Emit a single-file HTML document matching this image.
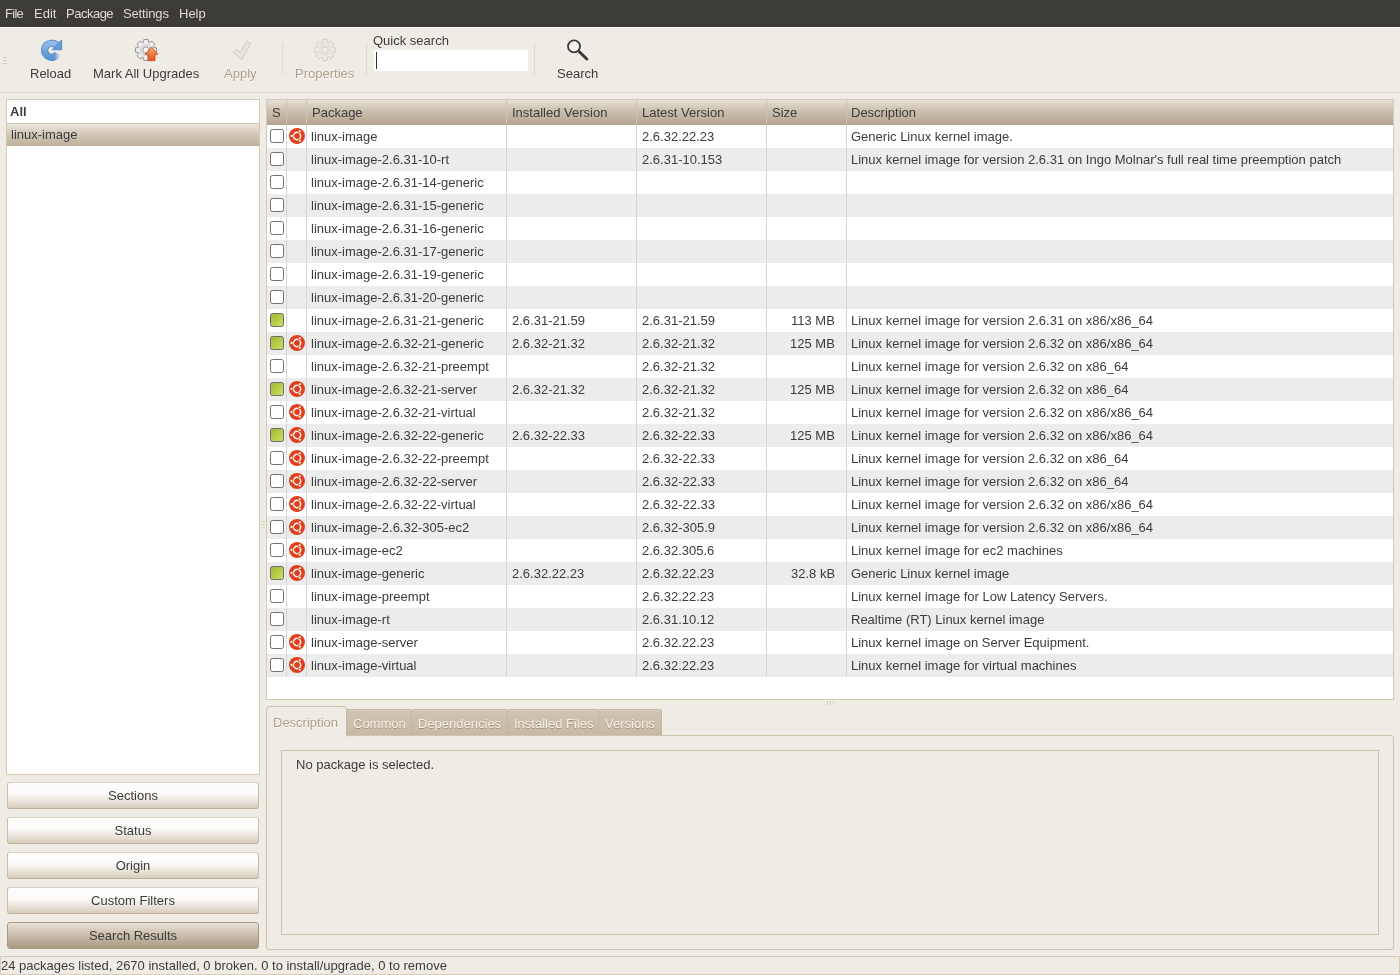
<!DOCTYPE html>
<html><head><meta charset="utf-8">
<style>
*{margin:0;padding:0;box-sizing:border-box}
html,body{width:1400px;height:975px;overflow:hidden;background:#efebe5;font-family:"Liberation Sans",sans-serif;font-size:13px;color:#3c3c3c;position:relative}
.t{position:absolute;line-height:15px;white-space:nowrap;will-change:transform}
#menubar{position:absolute;left:0;top:0;width:1400px;height:27px;background:#3c3b37}
#menubar .t{color:#dfdbd2;top:6px}
#tbline{position:absolute;left:0;top:27px;width:1400px;height:1px;background:#fdfaf3}
#tbbot{position:absolute;left:0;top:92px;width:1400px;height:1px;background:#e1d8c8}
.lbl{top:66px}
.dis{color:#ad9f87;text-shadow:0 1px 0 #fff}
.sep{position:absolute;top:43px;width:1px;height:32px;background:#e3dbcd}
#entry{position:absolute;left:374px;top:50px;width:154px;height:21px;background:#fff}
#caret{position:absolute;left:376px;top:52px;width:1px;height:17px;background:#333}
#left{position:absolute;left:6px;top:99px;width:254px;height:676px;background:#fff;border:1px solid #d5c9b4}
#lefthdr{position:absolute;left:7px;top:123px;width:252px;height:1px;background:#d2c6b0}
#leftsel{position:absolute;left:7px;top:124px;width:252px;height:22px;background:linear-gradient(#ede7de 0%,#d8cebf 35%,#c8bba8 75%,#bcae9a 100%)}
.btn{position:absolute;left:7px;width:252px;height:27px;border:1px solid #c9bda8;border-top-color:#dcd2c2;border-bottom-color:#bcae98;border-radius:3px;background:linear-gradient(#fefefd 0%,#fbfaf8 45%,#d8cdbc 100%);text-align:center;line-height:25px;will-change:transform}
.btn.on{background:linear-gradient(#e9e2d8 0%,#c9bcaa 50%,#a99a84 100%);border-color:#a8997f}
#table{position:absolute;left:266px;top:99px;width:1128px;height:601px;background:#fff;border:1px solid #d5c9b4;overflow:hidden}
#thead{position:absolute;left:267px;top:100px;width:1126px;height:25px;background:linear-gradient(#e6e0d5 0%,#cdc2b1 40%,#bcae9b 80%,#b3a591 100%)}
#thead .hs{position:absolute;top:0;width:1px;height:24px;background:#cfc3b0}
#thead .t{top:5px}
.row{position:absolute;left:267px;width:1126px;height:23px;background:#fff}
.row.alt{background:#ececec}
.row .c{position:absolute;top:4px;line-height:15px;white-space:nowrap;will-change:transform}
.pk{left:44px} .iv{left:245px} .lv{left:375px} .sz{right:558px;text-align:right} .ds{left:584px}
.vl{position:absolute;top:125px;width:1px;height:552px;background:#d6d6d6}
.cb{position:absolute;left:3px;top:4px;width:14px;height:14px;border:1.5px solid #707070;border-radius:2.5px;background:#fff}
.cb.green{background:linear-gradient(135deg,#9fb834,#cde05c);border-color:#6c6c70}
.ubu{position:absolute;left:22px;top:3px}
#nb{position:absolute;left:266px;top:735px;width:1128px;height:215px;border:1px solid #cfc2ab;border-radius:0 3px 3px 3px}
#nbtop{position:absolute;left:346px;top:735px;width:1048px;height:1px;background:#d3c7b1}
#tabact{position:absolute;left:266px;top:706px;width:81px;height:31px;background:#efebe5;border:1px solid #cfc2ab;border-bottom:none;border-radius:4px 4px 0 0}
.tab{position:absolute;top:709px;height:26px;background:linear-gradient(#d0c5b2,#c6b9a3);border:1px solid #c3b69f;border-bottom:none;border-radius:3px 3px 0 0;box-shadow:inset 0 1px 0 #dcd2c2}
.tab .t{top:6px;color:#f5f1ea;text-shadow:0 1px 0 #a39479}
#inner{position:absolute;left:281px;top:750px;width:98px;height:185px;border:1px solid #cfc2ab}
#status{position:absolute;left:0;top:956px;width:1400px;height:19px;border:1px solid #d8ccb8;background:#efebe5}
#grip{position:absolute;left:3px;top:57px;width:4px;height:7px;border-top:1px solid #d9ceb9;border-bottom:1px solid #d9ceb9}
#grip:after{content:"";position:absolute;left:0;top:2px;width:4px;height:1px;background:#d9ceb9}
</style></head><body>
<div id="menubar">
<div class="t" style="left:5px;letter-spacing:-0.7px">File</div>
<div class="t" style="left:34px">Edit</div>
<div class="t" style="left:66px;letter-spacing:-0.5px">Package</div>
<div class="t" style="left:123px;letter-spacing:-0.15px">Settings</div>
<div class="t" style="left:179px">Help</div>
</div>
<div id="tbline"></div>
<div id="grip"></div>
<svg width="24" height="24" viewBox="0 0 24 24" style="position:absolute;left:39px;top:38px">
<defs><linearGradient id="rg" x1="0" y1="0" x2="0" y2="1"><stop offset="0" stop-color="#93bbe6"/><stop offset="0.5" stop-color="#74a4db"/><stop offset="1" stop-color="#5e94d2"/></linearGradient>
<linearGradient id="fade" gradientUnits="userSpaceOnUse" x1="15.5" y1="0" x2="21.5" y2="0"><stop offset="0" stop-color="#fff"/><stop offset="1" stop-color="#fff" stop-opacity="0"/></linearGradient>
<mask id="fm" maskUnits="userSpaceOnUse" x="0" y="0" width="24" height="24"><rect x="0" y="0" width="24" height="12.5" fill="#fff"/><rect x="0" y="12" width="24" height="12.5" fill="url(#fade)"/></mask></defs>
<g mask="url(#fm)">
<path d="M18.6 8.6 A7.0 7.0 0 1 0 18.8 15.6" fill="none" stroke="#4d87ca" stroke-width="7.2"/>
<path d="M18.6 8.6 A7.0 7.0 0 1 0 18.8 15.6" fill="none" stroke="url(#rg)" stroke-width="5.6"/>
</g>
<polygon points="22.6,2.1 22.6,11.8 13.1,11.8" fill="#6a9edb" stroke="#4a84c8" stroke-width="0.9" stroke-linejoin="round"/>
</svg>
<div class="t lbl" style="left:30px">Reload</div>
<svg width="24" height="24" viewBox="0 0 24 24" style="position:absolute;left:134px;top:38px">
<defs><linearGradient id="ag" x1="0" y1="0" x2="0" y2="1"><stop offset="0" stop-color="#f6ab6c"/><stop offset="1" stop-color="#e2561c"/></linearGradient></defs>
<path d="M8.94,4.61 L9.35,4.45 L9.82,1.53 L14.18,1.53 L14.65,4.45 L15.06,4.61 L15.46,4.79 L17.86,3.05 L20.95,6.14 L19.21,8.54 L19.39,8.94 L19.55,9.35 L22.47,9.82 L22.47,14.18 L19.55,14.65 L19.39,15.06 L19.21,15.46 L20.95,17.86 L17.86,20.95 L15.46,19.21 L15.06,19.39 L14.65,19.55 L14.18,22.47 L9.82,22.47 L9.35,19.55 L8.94,19.39 L8.54,19.21 L6.14,20.95 L3.05,17.86 L4.79,15.46 L4.61,15.06 L4.45,14.65 L1.53,14.18 L1.53,9.82 L4.45,9.35 L4.61,8.94 L4.79,8.54 L3.05,6.14 L6.14,3.05 L8.54,4.79Z" fill="#ededed" stroke="#8a8a8a" stroke-width="0.9" stroke-linejoin="round"/>
<circle cx="12" cy="12" r="5.6" fill="#dcdcdc" stroke="#c4c4c4" stroke-width="0.6"/>
<circle cx="12" cy="12" r="3.1" fill="#f5f5f5" stroke="#8c8c8c" stroke-width="0.8"/>
<path d="M17.5,9 L23.8,16.3 L21,16.3 L21,22.6 L14,22.6 L14,16.3 L11.2,16.3 Z" fill="url(#ag)" stroke="#c8401a" stroke-width="0.8"/>
</svg>
<div class="t lbl" style="left:93px">Mark All Upgrades</div>
<svg width="24" height="24" viewBox="0 0 24 24" style="position:absolute;left:230px;top:38px">
<polygon points="3.1,14.4 5.8,11.4 10.4,14.4 17,3.1 20.8,5.5 11.8,21.3" fill="#e8e6e0" stroke="#cbc9c0" stroke-width="0.9" stroke-linejoin="round"/>
</svg>
<div class="t lbl dis" style="left:224px">Apply</div>
<div class="sep" style="left:282px"></div>
<svg width="24" height="24" viewBox="0 0 24 24" style="position:absolute;left:313px;top:38px">
<path d="M8.98,4.70 L9.35,4.56 L9.82,1.42 L14.18,1.42 L14.65,4.56 L15.02,4.70 L15.39,4.86 L17.93,2.98 L21.02,6.07 L19.14,8.61 L19.30,8.98 L19.44,9.35 L22.58,9.82 L22.58,14.18 L19.44,14.65 L19.30,15.02 L19.14,15.39 L21.02,17.93 L17.93,21.02 L15.39,19.14 L15.02,19.30 L14.65,19.44 L14.18,22.58 L9.82,22.58 L9.35,19.44 L8.98,19.30 L8.61,19.14 L6.07,21.02 L2.98,17.93 L4.86,15.39 L4.70,15.02 L4.56,14.65 L1.42,14.18 L1.42,9.82 L4.56,9.35 L4.70,8.98 L4.86,8.61 L2.98,6.07 L6.07,2.98 L8.61,4.86Z" fill="#ece9e3" stroke="#cfccc5" stroke-width="0.9" stroke-linejoin="round"/>
<circle cx="12" cy="12" r="6" fill="#e8e5df" stroke="#dedbd4" stroke-width="0.6"/>
<circle cx="12" cy="12" r="3.2" fill="#efebe5" stroke="#d2cfc8" stroke-width="0.9"/>
</svg>
<div class="t lbl dis" style="left:295px">Properties</div>
<div class="sep" style="left:366px"></div>
<div class="t" style="left:373px;top:33px">Quick search</div>
<div id="entry"></div><div id="caret"></div>
<div class="sep" style="left:534px"></div>
<svg width="24" height="24" viewBox="0 0 24 24" style="position:absolute;left:565px;top:38px">
<line x1="13.5" y1="13" x2="21.8" y2="21" stroke="#3a3a3a" stroke-width="3" stroke-linecap="round"/>
<circle cx="9" cy="8.3" r="6" fill="#f4f2ef" stroke="#3a3a3a" stroke-width="1.8"/>
</svg>
<div class="t lbl" style="left:557px">Search</div>
<div id="tbbot"></div>

<div id="left"></div>
<div class="t" style="left:10px;top:104px;font-weight:bold">All</div>
<div id="lefthdr"></div>
<div id="leftsel"></div>
<div class="t" style="left:11px;top:127px">linux-image</div>

<div class="btn" style="top:782px">Sections</div>
<div class="btn" style="top:817px">Status</div>
<div class="btn" style="top:852px">Origin</div>
<div class="btn" style="top:887px">Custom Filters</div>
<div class="btn on" style="top:922px">Search Results</div>

<div id="table"></div>
<div id="thead">
<div class="hs" style="left:19px"></div>
<div class="hs" style="left:39px"></div>
<div class="hs" style="left:239px"></div>
<div class="hs" style="left:369px"></div>
<div class="hs" style="left:499px"></div>
<div class="hs" style="left:579px"></div>
<div class="t" style="left:5px">S</div>
<div class="t" style="left:45px">Package</div>
<div class="t" style="left:245px">Installed Version</div>
<div class="t" style="left:375px">Latest Version</div>
<div class="t" style="left:505px">Size</div>
<div class="t" style="left:584px">Description</div>
</div>
<div class="row" style="top:125px"><div class="cb"></div><svg class="ubu" width="16" height="16" viewBox="0 0 16 16"><circle cx="8" cy="8" r="8" fill="#e03f1b"/><circle cx="8" cy="8" r="3.65" fill="none" stroke="#fff" stroke-width="1.5"/><g fill="#e03f1b"><circle cx="2.6" cy="8" r="1.9"/><circle cx="10.7" cy="3.3" r="1.9"/><circle cx="10.7" cy="12.7" r="1.9"/></g><g fill="#fff"><circle cx="2.6" cy="8" r="1.15"/><circle cx="10.7" cy="3.3" r="1.15"/><circle cx="10.7" cy="12.7" r="1.15"/></g></svg><span class="c pk">linux-image</span><span class="c iv"></span><span class="c lv">2.6.32.22.23</span><span class="c sz"></span><span class="c ds">Generic Linux kernel image.</span></div>
<div class="row alt" style="top:148px"><div class="cb"></div><span class="c pk">linux-image-2.6.31-10-rt</span><span class="c iv"></span><span class="c lv">2.6.31-10.153</span><span class="c sz"></span><span class="c ds">Linux kernel image for version 2.6.31 on Ingo Molnar's full real time preemption patch</span></div>
<div class="row" style="top:171px"><div class="cb"></div><span class="c pk">linux-image-2.6.31-14-generic</span><span class="c iv"></span><span class="c lv"></span><span class="c sz"></span><span class="c ds"></span></div>
<div class="row alt" style="top:194px"><div class="cb"></div><span class="c pk">linux-image-2.6.31-15-generic</span><span class="c iv"></span><span class="c lv"></span><span class="c sz"></span><span class="c ds"></span></div>
<div class="row" style="top:217px"><div class="cb"></div><span class="c pk">linux-image-2.6.31-16-generic</span><span class="c iv"></span><span class="c lv"></span><span class="c sz"></span><span class="c ds"></span></div>
<div class="row alt" style="top:240px"><div class="cb"></div><span class="c pk">linux-image-2.6.31-17-generic</span><span class="c iv"></span><span class="c lv"></span><span class="c sz"></span><span class="c ds"></span></div>
<div class="row" style="top:263px"><div class="cb"></div><span class="c pk">linux-image-2.6.31-19-generic</span><span class="c iv"></span><span class="c lv"></span><span class="c sz"></span><span class="c ds"></span></div>
<div class="row alt" style="top:286px"><div class="cb"></div><span class="c pk">linux-image-2.6.31-20-generic</span><span class="c iv"></span><span class="c lv"></span><span class="c sz"></span><span class="c ds"></span></div>
<div class="row" style="top:309px"><div class="cb green"></div><span class="c pk">linux-image-2.6.31-21-generic</span><span class="c iv">2.6.31-21.59</span><span class="c lv">2.6.31-21.59</span><span class="c sz">113 MB</span><span class="c ds">Linux kernel image for version 2.6.31 on x86/x86_64</span></div>
<div class="row alt" style="top:332px"><div class="cb green"></div><svg class="ubu" width="16" height="16" viewBox="0 0 16 16"><circle cx="8" cy="8" r="8" fill="#e03f1b"/><circle cx="8" cy="8" r="3.65" fill="none" stroke="#fff" stroke-width="1.5"/><g fill="#e03f1b"><circle cx="2.6" cy="8" r="1.9"/><circle cx="10.7" cy="3.3" r="1.9"/><circle cx="10.7" cy="12.7" r="1.9"/></g><g fill="#fff"><circle cx="2.6" cy="8" r="1.15"/><circle cx="10.7" cy="3.3" r="1.15"/><circle cx="10.7" cy="12.7" r="1.15"/></g></svg><span class="c pk">linux-image-2.6.32-21-generic</span><span class="c iv">2.6.32-21.32</span><span class="c lv">2.6.32-21.32</span><span class="c sz">125 MB</span><span class="c ds">Linux kernel image for version 2.6.32 on x86/x86_64</span></div>
<div class="row" style="top:355px"><div class="cb"></div><span class="c pk">linux-image-2.6.32-21-preempt</span><span class="c iv"></span><span class="c lv">2.6.32-21.32</span><span class="c sz"></span><span class="c ds">Linux kernel image for version 2.6.32 on x86_64</span></div>
<div class="row alt" style="top:378px"><div class="cb green"></div><svg class="ubu" width="16" height="16" viewBox="0 0 16 16"><circle cx="8" cy="8" r="8" fill="#e03f1b"/><circle cx="8" cy="8" r="3.65" fill="none" stroke="#fff" stroke-width="1.5"/><g fill="#e03f1b"><circle cx="2.6" cy="8" r="1.9"/><circle cx="10.7" cy="3.3" r="1.9"/><circle cx="10.7" cy="12.7" r="1.9"/></g><g fill="#fff"><circle cx="2.6" cy="8" r="1.15"/><circle cx="10.7" cy="3.3" r="1.15"/><circle cx="10.7" cy="12.7" r="1.15"/></g></svg><span class="c pk">linux-image-2.6.32-21-server</span><span class="c iv">2.6.32-21.32</span><span class="c lv">2.6.32-21.32</span><span class="c sz">125 MB</span><span class="c ds">Linux kernel image for version 2.6.32 on x86_64</span></div>
<div class="row" style="top:401px"><div class="cb"></div><svg class="ubu" width="16" height="16" viewBox="0 0 16 16"><circle cx="8" cy="8" r="8" fill="#e03f1b"/><circle cx="8" cy="8" r="3.65" fill="none" stroke="#fff" stroke-width="1.5"/><g fill="#e03f1b"><circle cx="2.6" cy="8" r="1.9"/><circle cx="10.7" cy="3.3" r="1.9"/><circle cx="10.7" cy="12.7" r="1.9"/></g><g fill="#fff"><circle cx="2.6" cy="8" r="1.15"/><circle cx="10.7" cy="3.3" r="1.15"/><circle cx="10.7" cy="12.7" r="1.15"/></g></svg><span class="c pk">linux-image-2.6.32-21-virtual</span><span class="c iv"></span><span class="c lv">2.6.32-21.32</span><span class="c sz"></span><span class="c ds">Linux kernel image for version 2.6.32 on x86/x86_64</span></div>
<div class="row alt" style="top:424px"><div class="cb green"></div><svg class="ubu" width="16" height="16" viewBox="0 0 16 16"><circle cx="8" cy="8" r="8" fill="#e03f1b"/><circle cx="8" cy="8" r="3.65" fill="none" stroke="#fff" stroke-width="1.5"/><g fill="#e03f1b"><circle cx="2.6" cy="8" r="1.9"/><circle cx="10.7" cy="3.3" r="1.9"/><circle cx="10.7" cy="12.7" r="1.9"/></g><g fill="#fff"><circle cx="2.6" cy="8" r="1.15"/><circle cx="10.7" cy="3.3" r="1.15"/><circle cx="10.7" cy="12.7" r="1.15"/></g></svg><span class="c pk">linux-image-2.6.32-22-generic</span><span class="c iv">2.6.32-22.33</span><span class="c lv">2.6.32-22.33</span><span class="c sz">125 MB</span><span class="c ds">Linux kernel image for version 2.6.32 on x86/x86_64</span></div>
<div class="row" style="top:447px"><div class="cb"></div><svg class="ubu" width="16" height="16" viewBox="0 0 16 16"><circle cx="8" cy="8" r="8" fill="#e03f1b"/><circle cx="8" cy="8" r="3.65" fill="none" stroke="#fff" stroke-width="1.5"/><g fill="#e03f1b"><circle cx="2.6" cy="8" r="1.9"/><circle cx="10.7" cy="3.3" r="1.9"/><circle cx="10.7" cy="12.7" r="1.9"/></g><g fill="#fff"><circle cx="2.6" cy="8" r="1.15"/><circle cx="10.7" cy="3.3" r="1.15"/><circle cx="10.7" cy="12.7" r="1.15"/></g></svg><span class="c pk">linux-image-2.6.32-22-preempt</span><span class="c iv"></span><span class="c lv">2.6.32-22.33</span><span class="c sz"></span><span class="c ds">Linux kernel image for version 2.6.32 on x86_64</span></div>
<div class="row alt" style="top:470px"><div class="cb"></div><svg class="ubu" width="16" height="16" viewBox="0 0 16 16"><circle cx="8" cy="8" r="8" fill="#e03f1b"/><circle cx="8" cy="8" r="3.65" fill="none" stroke="#fff" stroke-width="1.5"/><g fill="#e03f1b"><circle cx="2.6" cy="8" r="1.9"/><circle cx="10.7" cy="3.3" r="1.9"/><circle cx="10.7" cy="12.7" r="1.9"/></g><g fill="#fff"><circle cx="2.6" cy="8" r="1.15"/><circle cx="10.7" cy="3.3" r="1.15"/><circle cx="10.7" cy="12.7" r="1.15"/></g></svg><span class="c pk">linux-image-2.6.32-22-server</span><span class="c iv"></span><span class="c lv">2.6.32-22.33</span><span class="c sz"></span><span class="c ds">Linux kernel image for version 2.6.32 on x86_64</span></div>
<div class="row" style="top:493px"><div class="cb"></div><svg class="ubu" width="16" height="16" viewBox="0 0 16 16"><circle cx="8" cy="8" r="8" fill="#e03f1b"/><circle cx="8" cy="8" r="3.65" fill="none" stroke="#fff" stroke-width="1.5"/><g fill="#e03f1b"><circle cx="2.6" cy="8" r="1.9"/><circle cx="10.7" cy="3.3" r="1.9"/><circle cx="10.7" cy="12.7" r="1.9"/></g><g fill="#fff"><circle cx="2.6" cy="8" r="1.15"/><circle cx="10.7" cy="3.3" r="1.15"/><circle cx="10.7" cy="12.7" r="1.15"/></g></svg><span class="c pk">linux-image-2.6.32-22-virtual</span><span class="c iv"></span><span class="c lv">2.6.32-22.33</span><span class="c sz"></span><span class="c ds">Linux kernel image for version 2.6.32 on x86/x86_64</span></div>
<div class="row alt" style="top:516px"><div class="cb"></div><svg class="ubu" width="16" height="16" viewBox="0 0 16 16"><circle cx="8" cy="8" r="8" fill="#e03f1b"/><circle cx="8" cy="8" r="3.65" fill="none" stroke="#fff" stroke-width="1.5"/><g fill="#e03f1b"><circle cx="2.6" cy="8" r="1.9"/><circle cx="10.7" cy="3.3" r="1.9"/><circle cx="10.7" cy="12.7" r="1.9"/></g><g fill="#fff"><circle cx="2.6" cy="8" r="1.15"/><circle cx="10.7" cy="3.3" r="1.15"/><circle cx="10.7" cy="12.7" r="1.15"/></g></svg><span class="c pk">linux-image-2.6.32-305-ec2</span><span class="c iv"></span><span class="c lv">2.6.32-305.9</span><span class="c sz"></span><span class="c ds">Linux kernel image for version 2.6.32 on x86/x86_64</span></div>
<div class="row" style="top:539px"><div class="cb"></div><svg class="ubu" width="16" height="16" viewBox="0 0 16 16"><circle cx="8" cy="8" r="8" fill="#e03f1b"/><circle cx="8" cy="8" r="3.65" fill="none" stroke="#fff" stroke-width="1.5"/><g fill="#e03f1b"><circle cx="2.6" cy="8" r="1.9"/><circle cx="10.7" cy="3.3" r="1.9"/><circle cx="10.7" cy="12.7" r="1.9"/></g><g fill="#fff"><circle cx="2.6" cy="8" r="1.15"/><circle cx="10.7" cy="3.3" r="1.15"/><circle cx="10.7" cy="12.7" r="1.15"/></g></svg><span class="c pk">linux-image-ec2</span><span class="c iv"></span><span class="c lv">2.6.32.305.6</span><span class="c sz"></span><span class="c ds">Linux kernel image for ec2 machines</span></div>
<div class="row alt" style="top:562px"><div class="cb green"></div><svg class="ubu" width="16" height="16" viewBox="0 0 16 16"><circle cx="8" cy="8" r="8" fill="#e03f1b"/><circle cx="8" cy="8" r="3.65" fill="none" stroke="#fff" stroke-width="1.5"/><g fill="#e03f1b"><circle cx="2.6" cy="8" r="1.9"/><circle cx="10.7" cy="3.3" r="1.9"/><circle cx="10.7" cy="12.7" r="1.9"/></g><g fill="#fff"><circle cx="2.6" cy="8" r="1.15"/><circle cx="10.7" cy="3.3" r="1.15"/><circle cx="10.7" cy="12.7" r="1.15"/></g></svg><span class="c pk">linux-image-generic</span><span class="c iv">2.6.32.22.23</span><span class="c lv">2.6.32.22.23</span><span class="c sz">32.8 kB</span><span class="c ds">Generic Linux kernel image</span></div>
<div class="row" style="top:585px"><div class="cb"></div><span class="c pk">linux-image-preempt</span><span class="c iv"></span><span class="c lv">2.6.32.22.23</span><span class="c sz"></span><span class="c ds">Linux kernel image for Low Latency Servers.</span></div>
<div class="row alt" style="top:608px"><div class="cb"></div><span class="c pk">linux-image-rt</span><span class="c iv"></span><span class="c lv">2.6.31.10.12</span><span class="c sz"></span><span class="c ds">Realtime (RT) Linux kernel image</span></div>
<div class="row" style="top:631px"><div class="cb"></div><svg class="ubu" width="16" height="16" viewBox="0 0 16 16"><circle cx="8" cy="8" r="8" fill="#e03f1b"/><circle cx="8" cy="8" r="3.65" fill="none" stroke="#fff" stroke-width="1.5"/><g fill="#e03f1b"><circle cx="2.6" cy="8" r="1.9"/><circle cx="10.7" cy="3.3" r="1.9"/><circle cx="10.7" cy="12.7" r="1.9"/></g><g fill="#fff"><circle cx="2.6" cy="8" r="1.15"/><circle cx="10.7" cy="3.3" r="1.15"/><circle cx="10.7" cy="12.7" r="1.15"/></g></svg><span class="c pk">linux-image-server</span><span class="c iv"></span><span class="c lv">2.6.32.22.23</span><span class="c sz"></span><span class="c ds">Linux kernel image on Server Equipment.</span></div>
<div class="row alt" style="top:654px"><div class="cb"></div><svg class="ubu" width="16" height="16" viewBox="0 0 16 16"><circle cx="8" cy="8" r="8" fill="#e03f1b"/><circle cx="8" cy="8" r="3.65" fill="none" stroke="#fff" stroke-width="1.5"/><g fill="#e03f1b"><circle cx="2.6" cy="8" r="1.9"/><circle cx="10.7" cy="3.3" r="1.9"/><circle cx="10.7" cy="12.7" r="1.9"/></g><g fill="#fff"><circle cx="2.6" cy="8" r="1.15"/><circle cx="10.7" cy="3.3" r="1.15"/><circle cx="10.7" cy="12.7" r="1.15"/></g></svg><span class="c pk">linux-image-virtual</span><span class="c iv"></span><span class="c lv">2.6.32.22.23</span><span class="c sz"></span><span class="c ds">Linux kernel image for virtual machines</span></div>
<div class="vl" style="left:286px"></div>
<div class="vl" style="left:306px"></div>
<div class="vl" style="left:506px"></div>
<div class="vl" style="left:636px"></div>
<div class="vl" style="left:766px"></div>
<div class="vl" style="left:846px"></div>

<div style="position:absolute;left:827px;top:701px;width:1px;height:4px;background:#d8ccb6"></div>
<div style="position:absolute;left:830px;top:701px;width:1px;height:4px;background:#d8ccb6"></div>
<div style="position:absolute;left:833px;top:701px;width:1px;height:4px;background:#d8ccb6"></div>
<div style="position:absolute;left:261px;top:521px;width:4px;height:1px;background:#dcd1bd"></div>
<div style="position:absolute;left:261px;top:524px;width:4px;height:1px;background:#dcd1bd"></div>
<div style="position:absolute;left:261px;top:527px;width:4px;height:1px;background:#dcd1bd"></div>
<div id="nb"></div>
<div id="tabact"><div class="t dis" style="left:6px;top:8px">Description</div></div>
<div class="tab" style="left:346px;width:66px"><div class="t" style="left:6px">Common</div></div>
<div class="tab" style="left:411px;width:97px"><div class="t" style="left:6px">Dependencies</div></div>
<div class="tab" style="left:507px;width:92px"><div class="t" style="left:6px">Installed Files</div></div>
<div class="tab" style="left:598px;width:64px"><div class="t" style="left:6px">Versions</div></div>
<div id="inner" style="width:1098px"></div>
<div class="t" style="left:296px;top:757px">No package is selected.</div>

<div id="status"><div class="t" style="left:0px;top:1px">24 packages listed, 2670 installed, 0 broken. 0 to install/upgrade, 0 to remove</div></div>
</body></html>
